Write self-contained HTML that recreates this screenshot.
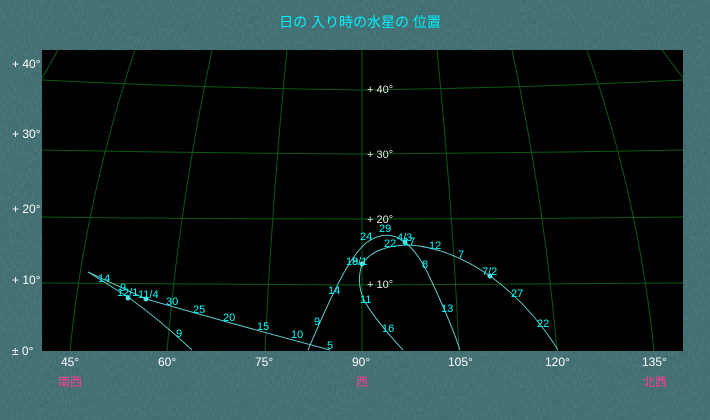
<!DOCTYPE html>
<html><head><meta charset="utf-8"><style>
html,body{margin:0;padding:0;background:#36655f;}
svg{display:block}
text{font-family:"Liberation Sans","Noto Sans CJK JP",sans-serif;}
</style></head><body>
<svg width="710" height="420" viewBox="0 0 710 420" xmlns="http://www.w3.org/2000/svg">
<defs>
<filter id="n" x="0" y="0" width="100%" height="100%">
<feTurbulence type="fractalNoise" baseFrequency="0.9 0.25" numOctaves="1" seed="3"/>
<feColorMatrix type="matrix" values="0 0 0 0 0.20  0 0 0 0 0.35  0 0 0 0 0.55  0 0 0 0.6 0"/>
</filter>
</defs>
<rect width="710" height="420" fill="#36655f"/>
<rect width="710" height="420" fill="#3a5f8a" filter="url(#n)" opacity="0.7"/>
<text x="360" y="27" fill="#00f0ff" font-size="14" text-anchor="middle">日の 入り時の水星の 位置</text>
<rect x="42" y="50" width="641" height="301" fill="#000"/>
<g stroke="#0b5a12" stroke-width="1" fill="none">
<path d="M42 80 Q200 88 362 90 Q524 88 683 80"/>
<path d="M42 150 Q200 153 362 154 Q524 153 683 150"/>
<path d="M42 217 Q200 219 362 219 Q524 219 683 217"/>
<path d="M42 283 L362 285 L683 283"/>
<path d="M362 50 L362 351"/>
<path d="M287 50 Q272 200 265 351"/>
<path d="M212 50 Q180 200 167 351"/>
<path d="M135 50 Q85 200 70 351"/>
<path d="M58 50 L42 78"/>
<path d="M437 50 Q452 200 459 351"/>
<path d="M512 50 Q544 200 557 351"/>
<path d="M587 50 Q639 200 654 351"/>
<path d="M662 50 L683 78"/>
</g>
<g stroke="#5cc8cc" stroke-width="1" fill="none">
<path d="M88 272 L128 297 Q160 320 192 350"/>
<path d="M88 272 L146 299 Q240 326 330 350"/>
<path d="M308 350 Q325 310 336 288 Q352 255 366 243 Q386 228 405 242 Q420 255 430 278 Q450 320 460 350"/>
<path d="M403 350 Q375 320 364 300 Q356 283 362 264 Q375 245 410 245 Q450 248 490 276 Q530 305 558 350"/>
</g>
<g fill="#5cdcdc">
<circle cx="128" cy="298" r="2.5"/><circle cx="146" cy="299" r="2.5"/>
<circle cx="405" cy="242" r="2.5"/><circle cx="362" cy="264" r="2.5"/><circle cx="490" cy="276" r="2.5"/>
</g>
<g fill="#00ffff" font-size="11">
<text x="98" y="282">14</text>
<text x="120" y="291">9</text>
<text x="117" y="296">12/1</text>
<text x="138" y="298">11/4</text>
<text x="166" y="305">30</text>
<text x="193" y="313">25</text>
<text x="223" y="321">20</text>
<text x="257" y="330">15</text>
<text x="291" y="338">10</text>
<text x="327" y="349">5</text>
<text x="176" y="337">9</text>
<text x="314" y="325">9</text>
<text x="328" y="294">14</text>
<text x="346" y="265">19</text>
<text x="352" y="265">8/1</text>
<text x="360" y="240">24</text>
<text x="379" y="232">29</text>
<text x="397" y="241">4/3</text>
<text x="384" y="247">22</text>
<text x="403" y="245">17</text>
<text x="429" y="249">12</text>
<text x="458" y="258">7</text>
<text x="482" y="275">7/2</text>
<text x="511" y="297">27</text>
<text x="537" y="327">22</text>
<text x="422" y="268">8</text>
<text x="441" y="312">13</text>
<text x="360" y="303">11</text>
<text x="382" y="332">16</text>
</g>
<g fill="#e8e8e8" font-size="11">
<text x="367" y="93">+ 40°</text>
<text x="367" y="158">+ 30°</text>
<text x="367" y="223">+ 20°</text>
<text x="367" y="288">+ 10°</text>
</g>
<g fill="#ffffff" font-size="12">
<text x="12" y="68">+ 40°</text>
<text x="12" y="138">+ 30°</text>
<text x="12" y="213">+ 20°</text>
<text x="12" y="284">+ 10°</text>
<text x="12" y="355">± 0°</text>
<text x="61" y="366">45°</text>
<text x="158" y="366">60°</text>
<text x="255" y="366">75°</text>
<text x="352" y="366">90°</text>
<text x="448" y="366">105°</text>
<text x="545" y="366">120°</text>
<text x="642" y="366">135°</text>
</g>
<g fill="#ff3c96" font-size="12">
<text x="58" y="386">南西</text>
<text x="356" y="386">西</text>
<text x="643" y="386">北西</text>
</g>
</svg>
</body></html>
